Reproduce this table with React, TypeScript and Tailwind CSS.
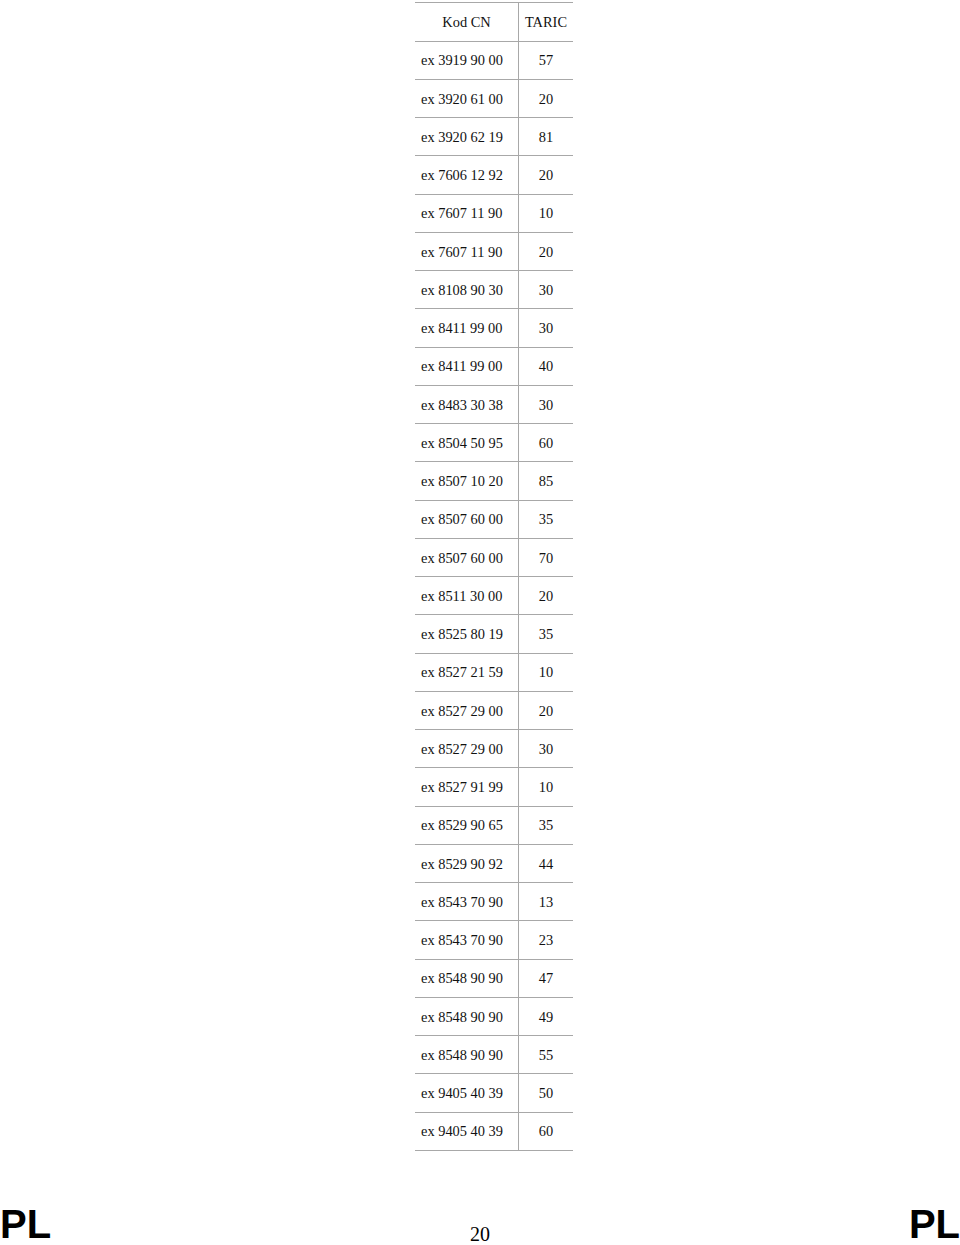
const rows: [string, string][] = [
  ["ex 3919 90 00", "57"],
  ["ex 3920 61 00", "20"],
  ["ex 3920 62 19", "81"],
  ["ex 7606 12 92", "20"],
  ["ex 7607 11 90", "10"],
  ["ex 7607 11 90", "20"],
  ["ex 8108 90 30", "30"],
  ["ex 8411 99 00", "30"],
  ["ex 8411 99 00", "40"],
  ["ex 8483 30 38", "30"],
  ["ex 8504 50 95", "60"],
  ["ex 8507 10 20", "85"],
  ["ex 8507 60 00", "35"],
  ["ex 8507 60 00", "70"],
  ["ex 8511 30 00", "20"],
  ["ex 8525 80 19", "35"],
  ["ex 8527 21 59", "10"],
  ["ex 8527 29 00", "20"],
  ["ex 8527 29 00", "30"],
  ["ex 8527 91 99", "10"],
  ["ex 8529 90 65", "35"],
  ["ex 8529 90 92", "44"],
  ["ex 8543 70 90", "13"],
  ["ex 8543 70 90", "23"],
  ["ex 8548 90 90", "47"],
  ["ex 8548 90 90", "49"],
  ["ex 8548 90 90", "55"],
  ["ex 9405 40 39", "50"],
  ["ex 9405 40 39", "60"],
];

export default function App() {
  return (
    <div className="h-[1245px] w-[960px] bg-white flex flex-col text-black overflow-hidden">
      <div className="pt-[2px] ml-[415px] w-[158px] font-['Liberation_Serif',serif] text-[14.4px] leading-none text-[#111]">
        <div className="border-t-[1.5px] border-[#a8a8a8]">
          <div className="flex h-[38.5px] border-b-[1.5px] border-[#a8a8a8]">
            <div className="w-[104px] flex items-center justify-center border-r-[1.5px] border-[#a8a8a8]">Kod CN</div>
            <div className="flex-1 flex items-center justify-center">TARIC</div>
          </div>
          {rows.map(([cn, taric], i) => (
            <div key={i} className="flex h-[38.25px] border-b-[1.5px] border-[#a8a8a8]">
              <div className="w-[104px] flex items-center pl-[6px] pt-[1px] border-r-[1.5px] border-[#a8a8a8]">{cn}</div>
              <div className="flex-1 flex items-center justify-center pt-[1px]">{taric}</div>
            </div>
          ))}
        </div>
      </div>
      <div className="mt-auto flex items-end justify-between leading-none pb-[1px]">
        <span className="font-['Liberation_Sans',sans-serif] font-bold text-[40px] leading-none">PL</span>
        <span className="font-['Liberation_Serif',serif] text-[20px] leading-none">20</span>
        <span className="font-['Liberation_Sans',sans-serif] font-bold text-[40px] leading-none">PL</span>
      </div>
    </div>
  );
}
